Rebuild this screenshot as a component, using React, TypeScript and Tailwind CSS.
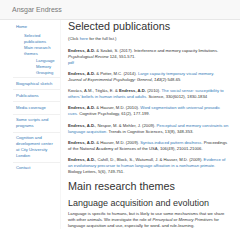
const LINK = "text-[#337ab7]";

type Pub = { key: string; body: React.ReactNode };

const PUBS: Pub[] = [
  {
    key: "szabo",
    body: (
      <>
        <b>Endress, A.D.</b> &amp; Szabó, S. (2017). Interference and memory capacity limitations.{" "}
        <i>Psychological Review</i> 124, 551-571.
        <br />
        <a className={LINK}>pdf</a>
      </>
    ),
  },
  {
    key: "potter",
    body: (
      <>
        <b>Endress, A.D.</b> &amp; Potter, M.C. (2014). <a className={LINK}>Large capacity temporary visual memory.</a>{" "}
        <i>Journal of Experimental Psychology: General, 143</i>(2):548-65
      </>
    ),
  },
  {
    key: "kovacs",
    body: (
      <>
        Kovács, Á.M., Téglás, E. &amp; <b>Endress, A.D.</b> (2010).{" "}
        <a className={LINK}>The social sense: susceptibility to others' beliefs in human infants and adults.</a>{" "}
        Science, 330(6012), 1830-1834
      </>
    ),
  },
  {
    key: "hauser10",
    body: (
      <>
        <b>Endress, A.D.</b> &amp; Hauser, M.D. (2010).{" "}
        <a className={LINK}>Word segmentation with universal prosodic cues.</a> Cognitive Psychology, 61(2), 177-199.
      </>
    ),
  },
  {
    key: "nespor",
    body: (
      <>
        <b>Endress, A.D.</b>, Nespor, M. &amp; Mehler, J. (2009).{" "}
        <a className={LINK}>Perceptual and memory constraints on language acquisition.</a> Trends in Cognitive
        Sciences, 13(8), 348-353.
      </>
    ),
  },
  {
    key: "hauser09",
    body: (
      <>
        <b>Endress, A.D.</b> &amp; Hauser, M.D. (2009). <a className={LINK}>Syntax-induced pattern deafness.</a>{" "}
        Proceedings of the National Academy of Sciences of the USA, 106(49), 21001-21006.
      </>
    ),
  },
  {
    key: "cahill",
    body: (
      <>
        <b>Endress, A.D.</b>, Cahill, D., Block, S., Watumull, J. &amp; Hauser, M.D. (2009).{" "}
        <a className={LINK}>Evidence of an evolutionary precursor to human language affixation in a nonhuman primate.</a>{" "}
        Biology Letters, 5(6), 749-751.
      </>
    ),
  },
];

const SIDE_LINKS = [
  "Biographical sketch",
  "Publications",
  "Media coverage",
  "Some scripts and programs",
  "Cognition and development center at City University London",
  "Contact",
];

function Sidebar() {
  return (
    <nav className="ml-[13px] w-[48px] shrink-0 border-r border-[#f6f6f6] text-[4.2px] leading-[6px] text-[#337ab7]">
      {/* Home with nested sections */}
      <div className="border-b border-[#f0f0f0] pt-[4px] pb-[1px] pl-[3px] pr-[2px]">
        <a>Home</a>
        <ul className="mt-[3px] pl-[8px]">
          <li>Selected publications</li>
          <li>Main research themes</li>
          <li>
            <ul className="mt-[1px] pl-[12px]">
              <li>Language</li>
              <li>Memory</li>
              <li>Grouping</li>
            </ul>
          </li>
        </ul>
      </div>
      {SIDE_LINKS.map((label) => (
        <div key={label} className="border-b border-[#f0f0f0] pt-[2.5px] pb-[2.7px] pl-[3px] pr-[6px] last:border-b-0">
          <a>{label}</a>
        </div>
      ))}
    </nav>
  );
}

export default function App() {
  return (
    <div className="h-[240px] w-[240px] overflow-hidden bg-white font-['Liberation_Sans',Arial,sans-serif] text-[#333]">
      <header className="flex h-[20px] items-center border-b border-[#e7e7e7] bg-[#f8f8f8] pl-[12px]">
        <span className="text-[7px] leading-none text-[#777]">Ansgar Endress</span>
      </header>
      <div className="flex">
        <Sidebar />
        <main className="ml-[7px] w-[161px] shrink-0">
          <h1 className="mt-[1px] mb-[3px] text-[10.8px] leading-[11.88px] font-medium">Selected publications</h1>
          <p className="mb-[6px] text-[4.2px] leading-[6px]">
            (Click <a className={LINK}>here</a> for the full list.)
          </p>
          {PUBS.map((p) => (
            <p key={p.key} className="mb-[5.2px] text-[4.2px] leading-[6px]">
              {p.body}
            </p>
          ))}
          <h1 className="mt-[6px] text-[10.8px] leading-[11.88px] font-medium">Main research themes</h1>
          <h2 className="mt-[6.6px] text-[9px] leading-[9.9px] font-medium">Language acquisition and evolution</h2>
          <p className="mt-[2px] text-[4.2px] leading-[6px]">
            Language is specific to humans, but is likely to use some mechanisms that we share with other animals. We
            investigate the role of <i>Perceptual</i> or <i>Memory Primitives</i> for language acquisition and use,
            especially for word- and rule-learning.
          </p>
        </main>
      </div>
    </div>
  );
}
